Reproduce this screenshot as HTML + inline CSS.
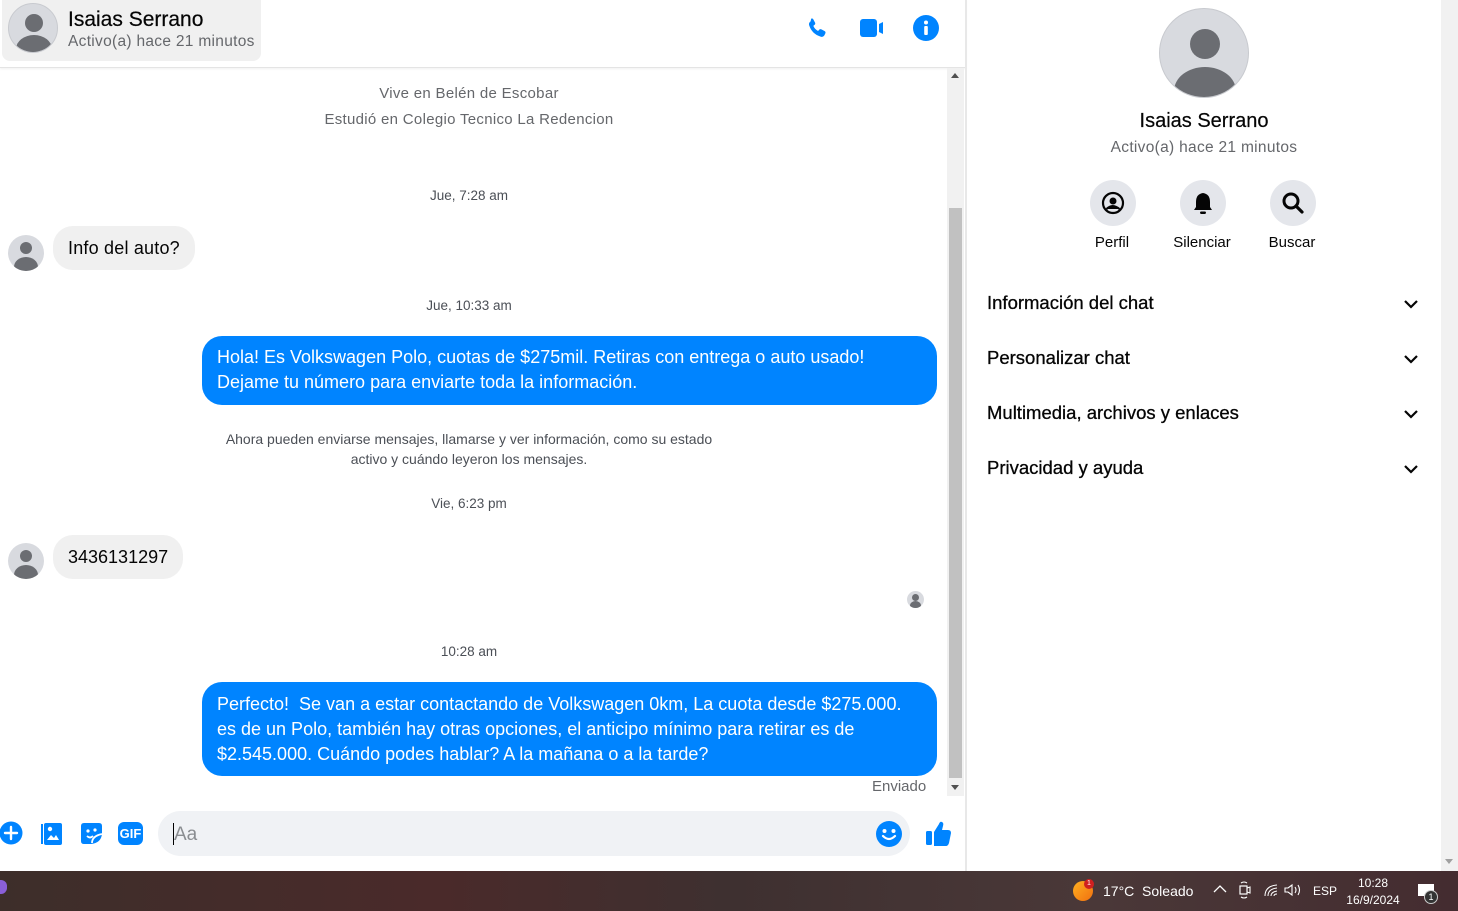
<!DOCTYPE html>
<html><head><meta charset="utf-8"><style>
*{box-sizing:border-box;margin:0;padding:0}
body{width:1458px;height:911px;overflow:hidden;background:#fff;font-family:"Liberation Sans",sans-serif;position:relative;color:#050505}
.abs{position:absolute}
.center{position:absolute;left:0;width:938px;text-align:center;color:#65676b}
.ts{font-size:13.5px;color:#4b4f56}
.av{position:absolute;width:36px;height:36px;border-radius:50%;background:#d8dadf;overflow:hidden}
.av:before{content:"";position:absolute;left:12px;top:7px;width:12px;height:12px;border-radius:50%;background:#6b6d72}
.av:after{content:"";position:absolute;left:6px;top:22px;width:24px;height:20px;border-radius:50%;background:#6b6d72}
.in{position:absolute;background:#f0f0f0;border-radius:20px;font-size:18px;padding:0 15px;line-height:44px;height:44px}
.out{position:absolute;left:202px;width:735px;background:#0084ff;color:#fff;border-radius:20px;font-size:18px;padding:9px 15px;line-height:25px}
.row{position:absolute;left:987px;width:440px;font-size:18.5px;color:#050505;-webkit-text-stroke:0.3px #050505}
.row svg{position:absolute;right:8px;top:4px}
.btn{position:absolute;top:180px;width:46px;height:46px;border-radius:50%;background:#e4e6eb}
.lbl{position:absolute;top:233px;font-size:15px;color:#050505;width:90px;text-align:center}
.tb{position:absolute;color:#fff}
</style></head><body>
<div class="abs" style="left:0;top:0;width:966px;height:68px;border-bottom:1px solid #e4e4e4;box-shadow:0 1px 2px rgba(0,0,0,.06)"></div>
<div class="abs" style="left:2px;top:0;width:259px;height:61px;background:#f0f0f0;border-radius:0 0 8px 8px"></div>
<div class="abs" style="left:8px;top:3px;width:50px;height:50px;border-radius:50%;background:#d8dadf;border:1px solid #c8cacf;overflow:hidden"><div style="position:absolute;left:16px;top:10px;width:18px;height:18px;border-radius:50%;background:#6b6d72"></div><div style="position:absolute;left:7px;top:31px;width:36px;height:28px;border-radius:50%;background:#6b6d72"></div></div>
<div class="abs" style="left:68px;top:8px;font-size:21px;color:#050505;-webkit-text-stroke:0.2px #050505">Isaias Serrano</div>
<div class="abs" style="left:68px;top:33px;font-size:15.5px;color:#65676b;letter-spacing:0.3px">Activo(a) hace 21 minutos</div>
<svg class="abs" style="left:804px;top:16px" width="26" height="26" viewBox="0 0 24 24"><path fill="#0084ff" d="M6.6 2.5c.8-.4 1.6-.1 2 .6l1.6 3c.4.7.2 1.5-.4 2l-1.2 1c.9 2.1 2.4 3.7 4.4 4.7l1.1-1.2c.5-.6 1.3-.7 2-.3l3 1.7c.7.4 1 1.3.6 2l-.8 1.6c-.6 1.2-2 1.9-3.300 1.500C9.900 17.400 6.500 13.900 4.700 8.400 4.300 7.100 4.900 5.700 6.100 5z"/></svg>
<svg class="abs" style="left:859px;top:17px" width="26" height="22" viewBox="0 0 26 22"><rect x="1" y="2" width="17" height="18" rx="3" fill="#0084ff"/><path d="M20 7l4-2v12l-4-2z" fill="#0084ff"/></svg>
<svg class="abs" style="left:913px;top:15px" width="26" height="26" viewBox="0 0 26 26"><circle cx="13" cy="13" r="13" fill="#0084ff"/><circle cx="13" cy="7.5" r="2" fill="#fff"/><rect x="11.2" y="11" width="3.6" height="9" rx="1" fill="#fff"/></svg>
<div class="abs" style="left:947px;top:68px;width:17px;height:728px;background:#f1f1f1"></div>
<div class="abs" style="left:949px;top:208px;width:13px;height:570px;background:#c1c1c1"></div>
<div class="abs" style="left:951px;top:73px;border:4px solid transparent;border-bottom:5px solid #505050;border-top:0"></div>
<div class="abs" style="left:951px;top:785px;border:4px solid transparent;border-top:5px solid #505050;border-bottom:0"></div>
<div class="abs" style="left:965px;top:0;width:2px;height:871px;background:#e8e8e8"></div>
<div class="center" style="top:85px;font-size:15px;letter-spacing:0.3px">Vive en Belén de Escobar</div>
<div class="center" style="top:111px;font-size:15px;letter-spacing:0.3px">Estudió en Colegio Tecnico La Redencion</div>
<div class="center ts" style="top:188px">Jue, 7:28 am</div>
<div class="av" style="left:8px;top:235px"></div>
<div class="in" style="left:53px;top:226px;letter-spacing:0.2px">Info del auto?</div>
<div class="center ts" style="top:298px">Jue, 10:33 am</div>
<div class="out" style="top:336px;height:69px">Hola! Es Volkswagen Polo, cuotas de $275mil. Retiras con entrega o auto usado!<br>Dejame tu número para enviarte toda la información.</div>
<div class="center" style="top:429px;font-size:14px;color:#4b4f56;line-height:20px;left:0;width:938px">Ahora pueden enviarse mensajes, llamarse y ver información, como su estado<br>activo y cuándo leyeron los mensajes.</div>
<div class="center ts" style="top:496px">Vie, 6:23 pm</div>
<div class="av" style="left:8px;top:543px"></div>
<div class="in" style="left:53px;top:535px">3436131297</div>
<div class="abs" style="left:907px;top:591px;width:17px;height:17px;border-radius:50%;background:#d8dadf;overflow:hidden"><div style="position:absolute;left:5px;top:3px;width:7px;height:7px;border-radius:50%;background:#6b6d72"></div><div style="position:absolute;left:3px;top:10px;width:11px;height:9px;border-radius:50%;background:#6b6d72"></div></div>
<div class="center ts" style="top:644px">10:28 am</div>
<div class="out" style="top:682px;height:94px;padding-top:10px">Perfecto!&nbsp; Se van a estar contactando de Volkswagen 0km, La cuota desde $275.000. es de un Polo, también hay otras opciones, el anticipo mínimo para retirar es de $2.545.000. Cuándo podes hablar? A la mañana o a la tarde?</div>
<div class="abs" style="left:872px;top:778px;font-size:15px;color:#65676b">Enviado</div>
<svg class="abs" style="left:0;top:821px" width="24" height="24" viewBox="0 0 24 24"><circle cx="11" cy="12" r="11.5" fill="#0084ff"/><path d="M11 6v12M5 12h12" stroke="#fff" stroke-width="2.4" stroke-linecap="round"/></svg>
<svg class="abs" style="left:38px;top:821px" width="26" height="25" viewBox="0 0 26 25"><path d="M3 3h2v20H3z" fill="#0084ff"/><rect x="6" y="2" width="18" height="22" rx="2" fill="#0084ff"/><circle cx="12" cy="8" r="2.2" fill="#fff"/><path d="M9 19l4-5 3 3 2-3 3 5z" fill="#fff"/></svg>
<svg class="abs" style="left:78px;top:821px" width="26" height="25" viewBox="0 0 26 25"><path d="M3 5q0-3 3-3h15q3 0 3 3v8q-1 9-11 10H6q-3 0-3-3z" fill="#0084ff"/><circle cx="10" cy="10" r="1.6" fill="#fff"/><circle cx="17" cy="9" r="1.6" fill="#fff"/><path d="M9 15q3 3 6 0M14 22q0-7 10-9" stroke="#fff" stroke-width="1.8" fill="none"/></svg>
<div class="abs" style="left:118px;top:822px;width:25px;height:23px;border-radius:6px;background:#0084ff;color:#fff;font-weight:bold;font-size:13px;line-height:23px;text-align:center">GIF</div>
<div class="abs" style="left:158px;top:811px;width:752px;height:45px;border-radius:23px;background:#f0f2f5"></div>
<div class="abs" style="left:173px;top:823px;width:1px;height:22px;background:#000"></div>
<div class="abs" style="left:174px;top:824px;font-size:19px;color:#8a8d91">Aa</div>
<svg class="abs" style="left:876px;top:821px" width="26" height="26" viewBox="0 0 26 26"><circle cx="13" cy="13" r="13" fill="#0084ff"/><circle cx="8.5" cy="10" r="2" fill="#fff"/><circle cx="17.5" cy="10" r="2" fill="#fff"/><path d="M7 15q6 6 12 0" stroke="#fff" stroke-width="2.2" fill="none" stroke-linecap="round"/></svg>
<svg class="abs" style="left:925px;top:820px" width="27" height="27" viewBox="0 0 27 27"><rect x="1" y="11" width="6" height="14" rx="1.5" fill="#0084ff"/><path d="M9 12l5-8q1-3 3-2 2 1 1 4l-1 4h6q3 0 3 3l-2 10q-1 3-3 3H9z" fill="#0084ff"/></svg>
<div class="abs" style="left:1159px;top:8px;width:90px;height:90px;border-radius:50%;background:#d8dadf;border:1px solid #c8cacf;overflow:hidden"><div style="position:absolute;left:30px;top:20px;width:30px;height:30px;border-radius:50%;background:#6b6d72"></div><div style="position:absolute;left:14px;top:58px;width:62px;height:48px;border-radius:50%;background:#6b6d72"></div></div>
<div class="abs" style="left:967px;width:474px;top:110px;text-align:center;font-size:20px;-webkit-text-stroke:0.2px #050505">Isaias Serrano</div>
<div class="abs" style="left:967px;width:474px;top:139px;text-align:center;font-size:15.5px;color:#65676b;letter-spacing:0.3px">Activo(a) hace 21 minutos</div>
<div class="btn" style="left:1090px"><svg style="margin:11px" width="24" height="24" viewBox="0 0 24 24"><circle cx="12" cy="12" r="10" fill="none" stroke="#050505" stroke-width="2.2"/><circle cx="12" cy="10" r="3.5" fill="#050505"/><path d="M5.5 18q6-6 13 0" fill="#050505" stroke="#050505" stroke-width="2"/></svg></div>
<div class="btn" style="left:1180px"><svg style="margin:11px" width="24" height="24" viewBox="0 0 24 24"><path d="M12 2q7 1 7 9v5l2 3H3l2-3v-5q0-8 7-9z" fill="#050505"/><rect x="9" y="20.5" width="6" height="2.5" rx="1.2" fill="#050505"/></svg></div>
<div class="btn" style="left:1270px"><svg style="margin:11px" width="24" height="24" viewBox="0 0 24 24"><circle cx="10" cy="10" r="7" fill="none" stroke="#050505" stroke-width="3"/><path d="M15 15l6 6" stroke="#050505" stroke-width="3.2" stroke-linecap="round"/></svg></div>
<div class="lbl" style="left:1067px;top:234px">Perfil</div>
<div class="lbl" style="left:1157px;top:234px">Silenciar</div>
<div class="lbl" style="left:1247px;top:234px">Buscar</div>
<div class="row" style="top:292px">Información del chat<svg width="16" height="16" viewBox="0 0 16 16"><path d="M2 5l6 6 6-6" stroke="#050505" stroke-width="2.2" fill="none"/></svg></div>
<div class="row" style="top:347px">Personalizar chat<svg width="16" height="16" viewBox="0 0 16 16"><path d="M2 5l6 6 6-6" stroke="#050505" stroke-width="2.2" fill="none"/></svg></div>
<div class="row" style="top:402px">Multimedia, archivos y enlaces<svg width="16" height="16" viewBox="0 0 16 16"><path d="M2 5l6 6 6-6" stroke="#050505" stroke-width="2.2" fill="none"/></svg></div>
<div class="row" style="top:457px">Privacidad y ayuda<svg width="16" height="16" viewBox="0 0 16 16"><path d="M2 5l6 6 6-6" stroke="#050505" stroke-width="2.2" fill="none"/></svg></div>
<div class="abs" style="left:1441px;top:0;width:17px;height:871px;background:#f1f1f1"></div>
<div class="abs" style="left:1445px;top:859px;border:4px solid transparent;border-top:5px solid #a0a0a0;border-bottom:0"></div>
<div class="abs" style="left:0;top:871px;width:1458px;height:40px;background:linear-gradient(90deg,#3d2e2a 0%,#4a2a2a 30%,#3e3030 50%,#4a3838 75%,#442c30 100%)"></div>
<div class="abs" style="left:0;top:880px;width:7px;height:14px;background:#8a5fd8;border-radius:0 6px 6px 0"></div>
<div class="abs" style="left:1073px;top:881px;width:20px;height:20px;border-radius:50%;background:linear-gradient(135deg,#ffb020,#f07010)"></div>
<div class="abs" style="left:1084px;top:879px;width:10px;height:10px;border-radius:50%;background:#d02020;color:#fff;font-size:7px;text-align:center;line-height:10px">1</div>
<div class="tb" style="left:1103px;top:883px;font-size:14px">17°C&nbsp; Soleado</div>
<svg class="abs" style="left:1213px;top:884px" width="14" height="10" viewBox="0 0 14 10"><path d="M1 8l6-6 6 6" stroke="#fff" stroke-width="1.3" fill="none"/></svg>
<svg class="abs" style="left:1238px;top:881px" width="14" height="18" viewBox="0 0 14 18"><rect x="2" y="5" width="7" height="8" stroke="#fff" fill="none" stroke-width="1.2"/><path d="M9 7l3-1v6l-3-1M3 2q3-2 6 0M3 16q3 2 6 0" stroke="#fff" fill="none" stroke-width="1.1"/></svg>
<svg class="abs" style="left:1263px;top:883px" width="16" height="14" viewBox="0 0 16 14"><path d="M2 13q0-10 12-11M5 13q0-7 9-8M8 13q0-4 6-5M11 13q0-2 3-2" stroke="#fff" fill="none" stroke-width="1"/></svg>
<svg class="abs" style="left:1284px;top:883px" width="18" height="14" viewBox="0 0 18 14"><path d="M1 5h3l4-3v10l-4-3H1z" stroke="#fff" fill="none" stroke-width="1.1"/><path d="M11 4q2 3 0 6M14 2q3 5 0 10" stroke="#fff" fill="none" stroke-width="1.1"/></svg>
<div class="tb" style="left:1313px;top:884px;font-size:12px">ESP</div>
<div class="tb" style="left:1345px;top:875px;font-size:12px;text-align:center;width:56px;line-height:17px">10:28<br>16/9/2024</div>
<div class="abs" style="left:1418px;top:884px;width:16px;height:12px;background:#fff"></div>
<div class="abs" style="left:1424px;top:890px;width:14px;height:14px;border-radius:50%;background:#333;border:1px solid #ccc;color:#fff;font-size:9px;text-align:center;line-height:12px">1</div>
</body></html>
